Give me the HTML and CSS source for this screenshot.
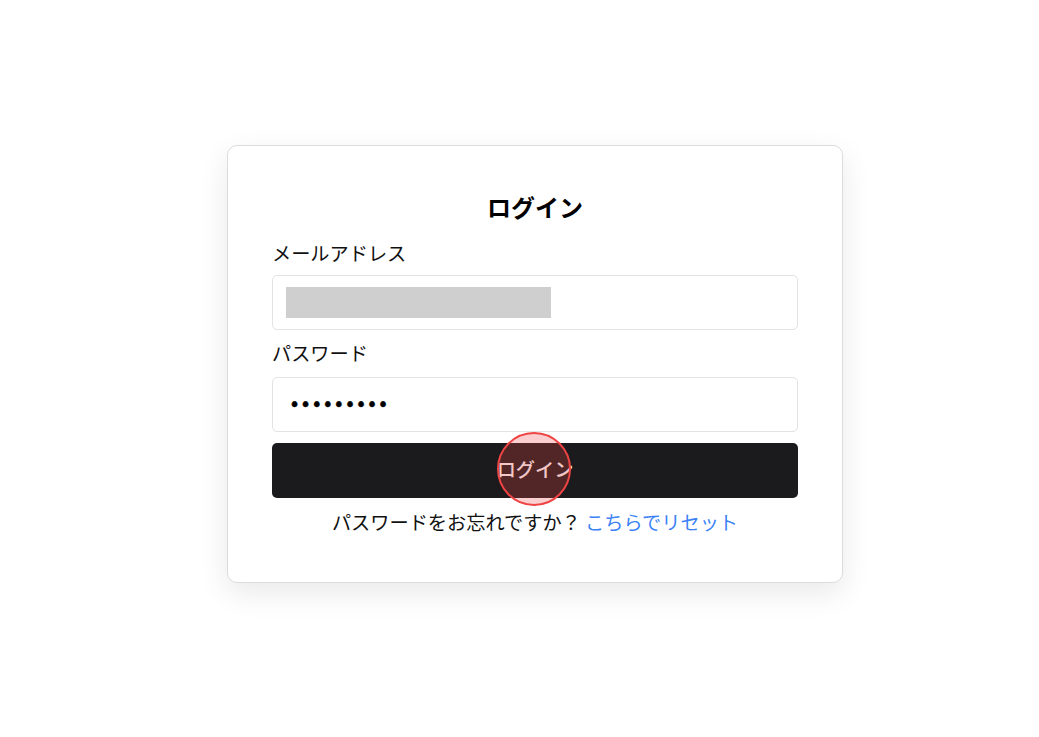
FILE: index.html
```html
<!DOCTYPE html>
<html lang="ja">
<head>
<meta charset="utf-8">
<title>ログイン</title>
<link rel="stylesheet" href="styles.css">
</head>
<body>
<main class="page">
  <form class="card">
    <h1 class="title">ログイン</h1>
    <label class="label">メールアドレス</label>
    <div class="field"><span class="redacted"></span></div>
    <label class="label label-pw">パスワード</label>
    <div class="field field-pw">•••••••••</div>
    <button type="button" class="btn">ログイン</button>
    <p class="foot">パスワードをお忘れですか？ <a class="link" href="#">こちらでリセット</a></p>
  </form>
</main>
<div class="click-dot"></div>
</body>
</html>
```
FILE: styles.css
```css
* { box-sizing: border-box; }
html, body { margin: 0; padding: 0; background: #ffffff; }
body {
  font-family: "Noto Sans CJK JP", "Noto Sans", sans-serif;
  color: #111111;
}
.page {
  min-height: 737px;
  display: flex;
  align-items: center;
  justify-content: center;
  padding-left: 31px;
  padding-bottom: 10px;
}
.card {
  width: 616px;
  border: 1px solid #dcdcdc;
  border-radius: 10px;
  background: #fff;
  box-shadow: 0 10px 30px rgba(0,0,0,0.09);
  padding: 43px 44px 46px;
  display: flex;
  flex-direction: column;
}
.title {
  margin: 0 0 15px;
  font-size: 24px;
  line-height: 35px;
  font-weight: 700;
  text-align: center;
  color: #000;
}
.label {
  font-size: 19.2px;
  line-height: 28px;
  color: #111;
  margin-bottom: 8px;
}
.label-pw { margin-top: 9px; margin-bottom: 10px; }
.field {
  height: 55px;
  border: 1px solid #e3e3e3;
  border-radius: 5px;
  padding: 11px 13px;
  display: flex;
  align-items: center;
}
.redacted {
  display: block;
  width: 265px;
  height: 31px;
  background: #cfcfcf;
}
.field-pw {
  padding: 0 16px;
  font-family: "DejaVu Sans", sans-serif;
  font-size: 18.8px;
  color: #000;
  -webkit-text-stroke: 0.4px #000;
}
.btn {
  margin-top: 11px;
  height: 55px;
  padding: 0 0 3px;
  border: none;
  border-radius: 5px;
  background: #1b1a1c;
  color: #f4f4f4;
  font-family: "Noto Sans CJK JP", "Noto Sans", sans-serif;
  font-size: 19.2px;
  font-weight: 500;
}
.foot {
  margin: 10px 0 0;
  text-align: center;
  font-size: 19.2px;
  line-height: 28px;
  color: #111;
}
.link { color: #3b82f6; text-decoration: none; }
.click-dot {
  position: absolute;
  left: 497px;
  top: 432px;
  width: 74px;
  height: 74px;
  border-radius: 50%;
  background: rgba(239, 68, 68, 0.26);
  border: 2.5px solid #ef4444;
  pointer-events: none;
}
```
